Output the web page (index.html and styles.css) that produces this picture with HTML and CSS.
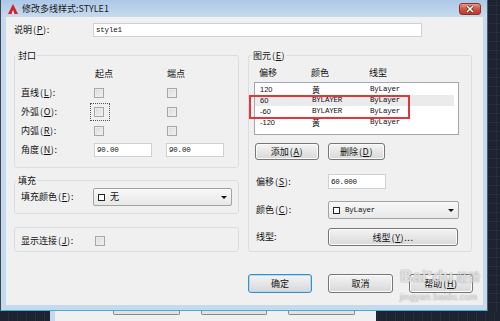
FILE: index.html
```html
<!DOCTYPE html>
<html lang="zh-CN">
<head>
  <meta charset="UTF-8" />
  <meta name="viewport" content="width=device-width, initial-scale=1.0"/>
  <title>修改多线样式:STYLE1</title>
  <link rel="stylesheet" href="styles.css">
</head>
<body>

  <div class="desk">
    <div class="window">
      <div class="titlebar">
        <svg class="logo" width="10" height="10" viewBox="0 0 10 10">
          <polygon points="5,0 10,10 0,10" fill="#d4202a"/>
          <polygon points="3.6,10 5,6 6.4,10" fill="#f2f2f2"/>
        </svg>
        <span class="title">修改多线样式:STYLE1</span>
        <span class="close">
          <svg width="10" height="8" viewBox="0 0 10 8">
            <path d="M2 1 L8 7 M8 1 L2 7" stroke="#6b2a22" stroke-width="3"/>
            <path d="M2 1 L8 7 M8 1 L2 7" stroke="#fff" stroke-width="1.6"/>
          </svg>
        </span>
      </div>

      <div class="client">
        <div class="desc-row">
          <span class="label">说明<span class="key">(<u>P</u>):</span></span>
          <input class="field desc" value="style1">
        </div>

        <div class="columns">
          <div class="left">
            <fieldset class="group caps">
              <legend>封口</legend>
              <div class="caps-grid">
                <span></span><span class="head">起点</span><span class="head">端点</span>
                <span class="label">直线<span class="key">(<u>L</u>):</span></span>
                <span><input type="checkbox" class="check"></span>
                <span><input type="checkbox" class="check second"></span>
                <span class="label">外弧<span class="key">(<u>O</u>):</span></span>
                <span><span class="focus"><input type="checkbox" class="check"></span></span>
                <span><input type="checkbox" class="check second"></span>
                <span class="label">内弧<span class="key">(<u>R</u>):</span></span>
                <span><input type="checkbox" class="check"></span>
                <span><input type="checkbox" class="check second"></span>
                <span class="label">角度<span class="key">(<u>N</u>):</span></span>
                <span><input class="field angle" value="90.00"></span>
                <span><input class="field angle" value="90.00"></span>
              </div>
            </fieldset>

            <fieldset class="group fill">
              <legend>填充</legend>
              <div class="fill-row">
                <span class="label">填充颜色<span class="key">(<u>F</u>):</span></span>
                <span class="combo fill-combo">
                  <span class="swatch"></span><span class="combo-text">无</span><span class="arrow"></span>
                </span>
              </div>
            </fieldset>

            <div class="joints">
              <span class="label">显示连接<span class="key">(<u>J</u>):</span></span>
              <input type="checkbox" class="check">
            </div>
          </div>

          <fieldset class="group elements">
            <legend>图元<span class="key">(<u>E</u>)</span></legend>
            <div class="list-head">
              <span>偏移</span><span>颜色</span><span>线型</span>
            </div>
            <div class="list">
              <div class="row"><span class="num">120</span><span class="cjk">黄</span><span class="mono">ByLayer</span></div>
              <div class="row selected"><span class="num">60</span><span class="mono">BYLAYER</span><span class="mono">ByLayer</span></div>
              <div class="row"><span class="num">-60</span><span class="mono">BYLAYER</span><span class="mono">ByLayer</span></div>
              <div class="row"><span class="num">-120</span><span class="cjk">黄</span><span class="mono">ByLayer</span></div>
              <div class="mark"></div>
            </div>
            <div class="list-buttons">
              <button class="btn add">添加<span class="key">(<u>A</u>)</span></button>
              <button class="btn del">删除<span class="key">(<u>D</u>)</span></button>
            </div>
            <div class="prop-row offset-row">
              <span class="label">偏移<span class="key">(<u>S</u>):</span></span>
              <input class="field offset" value="60.000">
            </div>
            <div class="prop-row color-row">
              <span class="label">颜色<span class="key">(<u>C</u>):</span></span>
              <span class="combo color-combo">
                <span class="swatch"></span><span class="combo-text mono">ByLayer</span><span class="arrow"></span>
              </span>
            </div>
            <div class="prop-row type-row">
              <span class="label">线型:</span>
              <button class="btn linetype">线型<span class="key">(<u>Y</u>)...</span></button>
            </div>
          </fieldset>
        </div>

        <div class="actions">
          <button class="btn ok">确定</button>
          <button class="btn">取消</button>
          <button class="btn">帮助<span class="key">(<u>H</u>)</span></button>
        </div>
      </div>
    </div>
    <div class="canvas"></div>
  </div>

  <div class="behind">
    <div class="behind-window">
      <span class="ghost"></span>
      <span class="ghost"></span>
      <span class="ghost"></span>
    </div>
  </div>

  <!-- watermark -->
  <div class="watermark">
    <div class="wm-main">Bai<span class="wm-paw">●</span>du<span class="wm-cn">经验</span></div>
    <div class="wm-url">jingyan.baidu.com</div>
  </div>

</body>
</html>
```

FILE: styles.css
```css
* {
  box-sizing: border-box;
}

body {
  margin: 0;
  width: 500px;
  height: 321px;
  overflow: hidden;
  position: relative;
  background: #1d2230;
  font-family: "Noto Sans CJK SC", "Noto Sans", sans-serif;
  font-size: 9px;
  line-height: 12px;
  color: #111;
}

.desk {
  display: flex;
  height: 311px;
}

/* Window frame */
.window {
  width: 488px;
  display: flex;
  flex-direction: column;
  padding: 0 4px 5px 5px;
  background: linear-gradient(#adc8e6 0, #c6daef 17px, #c6daef);
  border-left: 1px solid #3e4654;
  border-right: 1px solid #4e5a6a;
  border-bottom: 1px solid #31b5e4;
}

.titlebar {
  height: 17px;
  display: flex;
  align-items: center;
  padding-left: 2px;
}

.logo {
  display: block;
}

.title {
  margin-left: 4px;
  font-size: 9px;
  color: #1a1a1a;
}

.close {
  margin-left: auto;
  margin-right: 2px;
  align-self: flex-start;
  margin-top: 3px;
  width: 22px;
  height: 12px;
  border: 1px solid #8b3328;
  border-radius: 3px;
  background: linear-gradient(#e39a8c, #cf5443 50%, #bd3a2a);
  display: flex;
  align-items: center;
  justify-content: center;
}

.close svg {
  display: block;
}

/* Client area */
.client {
  flex: 1;
  display: flex;
  flex-direction: column;
  padding: 6px 11px 0 8px;
  background: #f0f0f0;
}

.key {
  margin-left: 1px;
  letter-spacing: 0.6px;
}

.field {
  margin: 0;
  height: 14px;
  padding: 0 2px;
  border: 1px solid #cdd0d4;
  background: #fff;
  font-family: "Liberation Mono", monospace;
  font-size: 7.5px;
  letter-spacing: -0.2px;
  color: #111;
  outline: none;
}

.desc-row {
  display: flex;
  align-items: center;
  height: 14px;
}

.desc-row .label {
  width: 79px;
}

.desc {
  width: 329px;
}

.columns {
  display: flex;
  gap: 9px;
  margin-top: 12px;
}

.left {
  width: 225px;
  display: flex;
  flex-direction: column;
}

/* Group boxes */
.group {
  margin: 0;
  min-width: 0;
  padding: 2px 6px 0;
  border: 1px solid #d8dee3;
  border-radius: 3px;
}

.group legend {
  padding: 0 1px;
  margin-left: -4px;
  line-height: 13px;
}

.caps {
  height: 119px;
}

.caps-grid {
  display: grid;
  grid-template-columns: 73px 72px 1fr;
  grid-auto-rows: 19px;
  align-items: center;
}

.head {
  padding-left: 1px;
}

.check {
  appearance: none;
  display: block;
  margin: 0;
  width: 10px;
  height: 10px;
  border: 1px solid #a7a7a7;
  background: linear-gradient(135deg, #d9d9d9, #f4f4f4);
  box-shadow: inset 0 0 0 1px #ececec;
}

.check.second {
  margin-left: 1px;
}

.focus {
  display: inline-block;
  margin-left: -3px;
  padding: 3px 5px 3px 3px;
  outline: 1px dotted #555;
  vertical-align: middle;
}

.angle {
  width: 58px;
  display: block;
}

.fill {
  height: 40px;
  margin-top: 6px;
}

.fill-row {
  display: flex;
  align-items: center;
  margin-top: -1px;
}

.fill-row .label {
  width: 72px;
}

.combo {
  height: 18px;
  display: flex;
  align-items: center;
  padding: 0 4px;
  border: 1px solid #a3a3a3;
  border-radius: 2px;
  background: linear-gradient(#f8f8f8, #e8e8e8);
}

.fill-combo {
  width: 139px;
}

.swatch {
  width: 7px;
  height: 7px;
  border: 1px solid #222;
  background: #fff;
}

.combo-text {
  margin-left: 5px;
}

.arrow {
  margin-left: auto;
  width: 0;
  height: 0;
  border-left: 3px solid transparent;
  border-right: 3px solid transparent;
  border-top: 3px solid #111;
}

.joints {
  height: 25px;
  margin-top: 13px;
  display: flex;
  align-items: center;
  padding: 2px 0 0 6px;
  border: 1px solid #d8dee3;
  border-radius: 3px;
}

.joints .label {
  width: 74px;
}

/* Elements list */
.elements {
  width: 224px;
  height: 203px;
  padding: 4px 5px 0;
}

.elements legend {
  margin-left: -2px;
}

.list-head,
.row {
  display: grid;
  grid-template-columns: 52px 58px 1fr;
  align-items: center;
  padding-left: 5px;
}

.list-head {
  height: 14px;
}

.list {
  position: relative;
  width: 205px;
  height: 53px;
  margin-top: 2px;
  padding-top: 1px;
  border: 1px solid #a4a7ad;
  background: #fff;
}

.row {
  height: 11px;
  font-size: 8px;
  line-height: 11px;
}

.row.selected {
  background: #ebebeb;
  margin-right: 4px;
}

.num {
  font-family: "Liberation Sans", sans-serif;
  font-size: 7.5px;
}

.mono {
  font-family: "Liberation Mono", monospace;
  font-size: 7.5px;
  letter-spacing: -0.2px;
}

.mark {
  position: absolute;
  left: -6px;
  top: 12px;
  width: 161px;
  height: 24px;
  border: 2px solid #e2363c;
}

/* Buttons */
.btn {
  margin: 0;
  padding: 0;
  height: 17px;
  border: 1px solid #777;
  border-radius: 3px;
  background: linear-gradient(#f4f4f4, #e6e6e6 50%, #d8d8d8);
  box-shadow: inset 0 0 0 1px #fbfbfb;
  font-family: "Noto Sans CJK SC", "Noto Sans", sans-serif;
  font-size: 9px;
  color: #111;
}

.list-buttons {
  display: flex;
  gap: 9px;
  margin: 8px 0 0 1px;
}

.add {
  width: 64px;
}

.del {
  width: 57px;
}

.prop-row {
  display: flex;
  align-items: center;
  padding-left: 2px;
}

.prop-row .label {
  width: 72px;
}

.offset-row {
  margin-top: 14px;
}

.offset {
  width: 58px;
  height: 15px;
}

.color-row {
  margin-top: 12px;
}

.color-combo {
  width: 131px;
}

.type-row {
  margin-top: 9px;
}

.linetype {
  width: 130px;
  height: 18px;
}

.actions {
  display: flex;
  justify-content: flex-end;
  gap: 16px;
  margin: 22px -1px 0 0;
}

.actions .btn {
  width: 64px;
  height: 19px;
}

.actions .btn:nth-child(2) {
  width: 65px;
}

.actions .ok {
  border-color: #3c8dc4;
  box-shadow: inset 0 0 0 1px #a9dcf6;
}

/* Drawing area behind the dialog */
.canvas {
  flex: 1;
  background:
    repeating-linear-gradient(90deg, transparent 0 8px, #272d3b 8px 9px),
    repeating-linear-gradient(0deg, transparent 0 8px, #272d3b 8px 9px),
    #1e2331;
}

.behind {
  height: 10px;
  padding-left: 50px;
  background:
    repeating-linear-gradient(90deg, transparent 0 8px, #272d3b 8px 9px),
    #1e2331;
}

.behind-window {
  width: 326px;
  height: 10px;
  display: flex;
  background: #f0f0f0;
  border-left: 5px solid #c4d8ee;
  padding-left: 58px;
}

.ghost {
  width: 70px;
  height: 4px;
  margin-right: 21px;
  border: 1px solid #8a8a8a;
  border-top: 0;
  border-radius: 0 0 2px 2px;
  background: #e2e2e2;
}

.watermark {
  position: absolute;
  left: 400px;
  top: 262px;
  color: rgba(255, 255, 255, 0.75);
  text-shadow: 0 0 1px rgba(0, 0, 0, 0.4), 0 0 2px rgba(0, 0, 0, 0.15);
  font-family: "Liberation Sans", sans-serif;
  pointer-events: none;
}

.wm-main {
  font-size: 17px;
  line-height: 22px;
  font-weight: bold;
}

.wm-paw {
  font-size: 10px;
  vertical-align: 6px;
}

.wm-cn {
  margin-left: 3px;
  font-family: "Noto Sans CJK SC", sans-serif;
  font-size: 12px;
  font-weight: normal;
}

.wm-url {
  margin-top: 4px;
  font-size: 9px;
  line-height: 11px;
  letter-spacing: 0.3px;
}
```
